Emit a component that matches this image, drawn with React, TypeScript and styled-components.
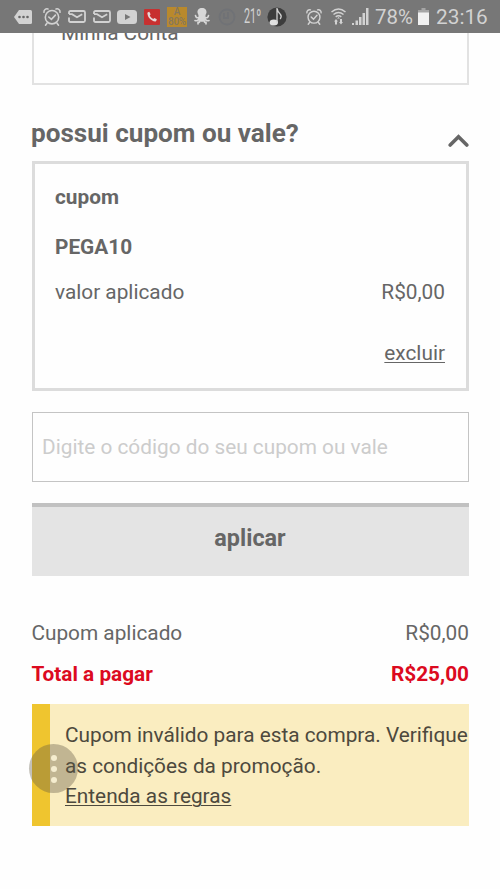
import React from "react";
import styled, { createGlobalStyle } from "styled-components";

const GlobalStyle = createGlobalStyle`
  * { box-sizing: border-box; }
  body { margin: 0; background: #fefefe; font-family: Roboto, "Liberation Sans", sans-serif; color: #666; }
`;

const Screen = styled.div`
  position: relative;
  width: 500px;
  height: 889px;
  overflow: hidden;
  background: #fefefe;
`;

const StatusBar = styled.header`
  display: flex;
  align-items: center;
  width: 500px;
  height: 33px;
  background: #777;
  color: #d2d2d2;
  overflow: hidden;
`;

const Slot = styled.span<{ $gap: number; $width: number }>`
  display: flex;
  flex: none;
  align-items: center;
  width: ${(p) => p.$width}px;
  height: 33px;
  margin-left: ${(p) => p.$gap}px;
  white-space: nowrap;
  svg { display: block; overflow: visible; }
`;

const StatusText = styled.span<{ $size?: number }>`
  font-size: ${(p) => p.$size ?? 20}px;
  line-height: 33px;
  padding-top: 1px;
`;

const Temperature = styled.span`
  font-size: 20px;
  line-height: 33px;
  transform: scaleX(0.54);
  transform-origin: left center;
`;

const BatteryApp = styled.span`
  display: flex;
  flex-direction: column;
  align-items: center;
  width: 20px;
  height: 20px;
  background: #b9892c;
  color: #86775c;
  font-size: 10px;
  font-weight: 500;
  line-height: 10px;
  letter-spacing: -0.3px;
`;

const Content = styled.main`
  display: flex;
  flex-direction: column;
  margin: 0 31px 0 32px;
  font-size: 20.8px;
  line-height: 24px;
`;

const AccountBox = styled.section`
  height: 52px;
  padding-left: 27px;
  border: 2px solid #e2e2e2;
  border-top: 0;
  overflow: hidden;
`;

const AccountLink = styled.div`
  margin-top: -12px;
`;

const SectionHeader = styled.div`
  display: flex;
  justify-content: space-between;
  height: 76px;
  padding-top: 33px;
`;

const Title = styled.h2`
  margin: 0 0 0 -1px;
  font-size: 26.1px;
  font-weight: 700;
  line-height: 30px;
`;

const Chevron = styled.svg`
  width: 21px;
  height: 13px;
  margin-top: 16px;
`;

const CouponCard = styled.section`
  display: flex;
  flex-direction: column;
  height: 230px;
  padding: 21px 21px 0 20px;
  border: 3px solid #dcdcdc;
`;

const CouponLabel = styled.strong`
  margin-bottom: 26px;
`;

const CouponCode = styled.strong`
  margin-bottom: 21px;
`;

const Row = styled.div`
  display: flex;
  justify-content: space-between;
`;

const RemoveLink = styled.a`
  align-self: flex-end;
  margin-top: 37px;
  text-decoration: underline;
  text-decoration-thickness: 1px;
  text-underline-offset: 2px;
`;

const CodeInput = styled.input`
  height: 70px;
  margin: 21px 0 0;
  padding: 0 9px;
  border: 1px solid #c4c4c4;
  border-radius: 0;
  background: #fefefe;
  font: 20.8px Roboto, sans-serif;
  outline: 0;
  &::placeholder { color: #ccc; opacity: 1; }
`;

const ApplyButton = styled.button`
  height: 73px;
  margin: 21px 0 45px;
  padding: 0 1px 7px 0;
  border: 0;
  border-top: 4px solid #c1c1c1;
  background: #e4e4e4;
  color: #666;
  font: 700 23.4px Roboto, sans-serif;
`;

const Totals = styled.div`
  height: 83px;
  margin-left: -0.6px;
`;

const TotalRow = styled(Row)`
  margin-bottom: 17px;
`;

const GrandTotal = styled(Row)`
  color: #dc0a20;
  font-weight: 700;
`;

const Alert = styled.section`
  height: 122px;
  padding: 16px 0 0 15px;
  border-left: 18px solid #efc52f;
  background: #faedc0;
  color: #4d493d;
  line-height: 30.6px;
  white-space: nowrap;
`;

const RulesLink = styled.a`
  text-decoration: underline;
  text-decoration-thickness: 1px;
  text-underline-offset: 2px;
`;

const FloatingHandle = styled.div`
  position: absolute;
  top: 744px;
  left: 29px;
  display: flex;
  flex-direction: column;
  align-items: center;
  justify-content: center;
  gap: 5px;
  width: 49px;
  height: 49px;
  border-radius: 50%;
  background: rgba(95, 87, 68, 0.37);
`;

const Dot = styled.i`
  width: 6px;
  height: 6px;
  border-radius: 50%;
  background: #f5edcf;
`;

const Alarm = ({ size }: { size: number }) => (
  <svg width={size} height={size} viewBox="0 0 18 18" fill="none" stroke="#d2d2d2" strokeWidth="1.6" strokeLinecap="round">
    <circle cx="9" cy="9.2" r="6.7" />
    <path d="M1 4.3A3 3 0 0 1 5 1M13 1a3 3 0 0 1 4 3.3M4 15.2l-1.5 2M14 15.2l1.5 2M5.8 9l2.6 2.4 4-4.3" />
  </svg>
);

const Mail = () => (
  <svg width="18" height="13" viewBox="0 0 18 13" fill="none" stroke="#d2d2d2" strokeWidth="1.8">
    <path d="M1 4V2.5Q1 1 2.5 1h13Q17 1 17 2.5v8q0 1.5-1.5 1.5h-13Q1 12 1 10.500V7.500" />
    <path d="M1 4.200h3l5 3 5.200-3" />
  </svg>
);

const Tag = () => (
  <svg width="18" height="14" viewBox="0 0 18 14">
    <path d="M5 0h11.500Q18 0 18 1.500v11Q18 14 16.500 14H5L0 7z" fill="#d2d2d2" />
    <g fill="#666"><circle cx="5.500" cy="7" r="1.300" /><circle cx="9.500" cy="7" r="1.300" /><circle cx="13.500" cy="7" r="1.300" /></g>
  </svg>
);

const Video = () => (
  <svg width="20" height="14" viewBox="0 0 20 14">
    <rect width="20" height="14" rx="3.500" fill="#d2d2d2" />
    <path d="M8 4l5.500 3L8 10z" fill="#777" />
  </svg>
);

const Phone = () => (
  <svg width="16" height="16" viewBox="0 0 16 16">
    <rect width="16" height="16" rx="1" fill="#c73030" />
    <path d="M4 3.200l1.300-.5 1.300 2.500-.9 1.300c.7 1.500 1.900 2.700 3.500 3.400l1.200-1 2.400 1.400-.5 1.500c-.2.500-.6.700-1.100.6-4.100-.6-7.300-3.800-7.800-8-.1-.6.100-1 .6-1.200z" fill="#e5d8d8" />
  </svg>
);

const Octopus = () => (
  <svg width="16" height="17" viewBox="0 0 16 17" fill="none" stroke="#d8d8d8" strokeWidth="1.600" strokeLinecap="round">
    <path d="M8 0c3 0 4.800 2 4.500 4.500-.2 1.500-1.200 2-1 4l.5 3.500-4 2-4-2 .5-3.500c.2-2-.8-2.500-1-4C3.200 2 5 0 8 0z" fill="#d8d8d8" stroke="none" />
    <path d="M5 9.500Q2 10.500 1.500 7.500M11 9.500q3 1 3.500-2M5 11q-1.500 2.500-4 1.500M11 11q1.500 2.500 4 1.500M6.500 11.500Q6 14.500 4 14.500V16M9.500 11.500q.5 3 2.500 3V16" />
  </svg>
);

const FaintClock = () => (
  <svg width="18" height="18" viewBox="0 0 18 18" fill="none" stroke="#707276" strokeWidth="1.800">
    <circle cx="9" cy="9" r="7.500" /><path d="M6 5v5h5M10 4v5" />
  </svg>
);

const Music = () => (
  <svg width="20" height="20" viewBox="0 0 20 20">
    <circle cx="10" cy="10" r="9.600" fill="#3d3d3d" />
    <ellipse cx="6.800" cy="15.500" rx="4.200" ry="3" fill="#e0e0e0" />
    <path d="M10 15.500V1q.5 4 3.500 6.500 1.500 2-.3 4.500" fill="none" stroke="#d2d2d2" strokeWidth="1.300" />
  </svg>
);

const Wifi = () => (
  <svg width="15" height="17" viewBox="0 0 15 17" fill="none" stroke="#d2d2d2" strokeWidth="1.500">
    <path d="M.5 4Q7.500-2 14.500 4M2.500 6.500q5-4 10 0M4.700 8.800q2.800-2 5.600 0" />
    <path d="M7.500 9l1.500 1.500H6zM5 11l2 2.500H6v3H4v-3H3zM10 16.500L8 14h1v-3h2v3h1z" fill="#d2d2d2" stroke="none" />
  </svg>
);

const Signal = () => (
  <svg width="17" height="17" viewBox="0 0 17 17" fill="#d2d2d2">
    <path d="M0 15h2v2H0zM3.500 12.500H6V17H3.500zM7 9h2.500v8H7zM10.500 5H13v12h-2.500zM14 0h2.500v17H14z" />
  </svg>
);

const Battery = () => (
  <svg width="11" height="17" viewBox="0 0 11 17">
    <path d="M3.500 0h4v2H11v3H0V2h3.500z" fill="#a5a5a5" />
    <path d="M0 4.500h11V17H0z" fill="#f1f1f1" />
  </svg>
);

export default function App() {
  return (
    <Screen>
      <GlobalStyle />
      <StatusBar>
        <Slot $gap={14} $width={18}><Tag /></Slot>
        <Slot $gap={11} $width={18}><Alarm size={18} /></Slot>
        <Slot $gap={7} $width={18}><Mail /></Slot>
        <Slot $gap={7} $width={18}><Mail /></Slot>
        <Slot $gap={6} $width={20}><Video /></Slot>
        <Slot $gap={7} $width={16}><Phone /></Slot>
        <Slot $gap={7} $width={20}><BatteryApp><span>A</span><span>80%</span></BatteryApp></Slot>
        <Slot $gap={7} $width={16}><Octopus /></Slot>
        <Slot $gap={8} $width={18}><FaintClock /></Slot>
        <Slot $gap={8} $width={16}><Temperature>21º</Temperature></Slot>
        <Slot $gap={7} $width={20}><Music /></Slot>
        <Slot $gap={19} $width={16}><Alarm size={16} /></Slot>
        <Slot $gap={9} $width={15}><Wifi /></Slot>
        <Slot $gap={6} $width={17}><Signal /></Slot>
        <Slot $gap={6} $width={38}><StatusText $size={20.4}>78%</StatusText></Slot>
        <Slot $gap={5} $width={11}><Battery /></Slot>
        <Slot $gap={7} $width={53}><StatusText $size={20.8}>23:16</StatusText></Slot>
      </StatusBar>
      <Content>
        <AccountBox><AccountLink>Minha Conta</AccountLink></AccountBox>
        <SectionHeader>
          <Title>possui cupom ou vale?</Title>
          <Chevron viewBox="0 0 21 13" fill="none" stroke="#666" strokeWidth="3.6" strokeLinecap="round">
            <path d="M2.200 11l8.300-8.300L18.800 11" />
          </Chevron>
        </SectionHeader>
        <CouponCard>
          <CouponLabel>cupom</CouponLabel>
          <CouponCode>PEGA10</CouponCode>
          <Row><span>valor aplicado</span><span>R$0,00</span></Row>
          <RemoveLink>excluir</RemoveLink>
        </CouponCard>
        <CodeInput placeholder="Digite o código do seu cupom ou vale" />
        <ApplyButton>aplicar</ApplyButton>
        <Totals>
          <TotalRow><span>Cupom aplicado</span><span>R$0,00</span></TotalRow>
          <GrandTotal><span>Total a pagar</span><span>R$25,00</span></GrandTotal>
        </Totals>
        <Alert>
          <div>Cupom inválido para esta compra. Verifique</div>
          <div>as condições da promoção.</div>
          <RulesLink>Entenda as regras</RulesLink>
        </Alert>
      </Content>
      <FloatingHandle><Dot /><Dot /><Dot /></FloatingHandle>
    </Screen>
  );
}
